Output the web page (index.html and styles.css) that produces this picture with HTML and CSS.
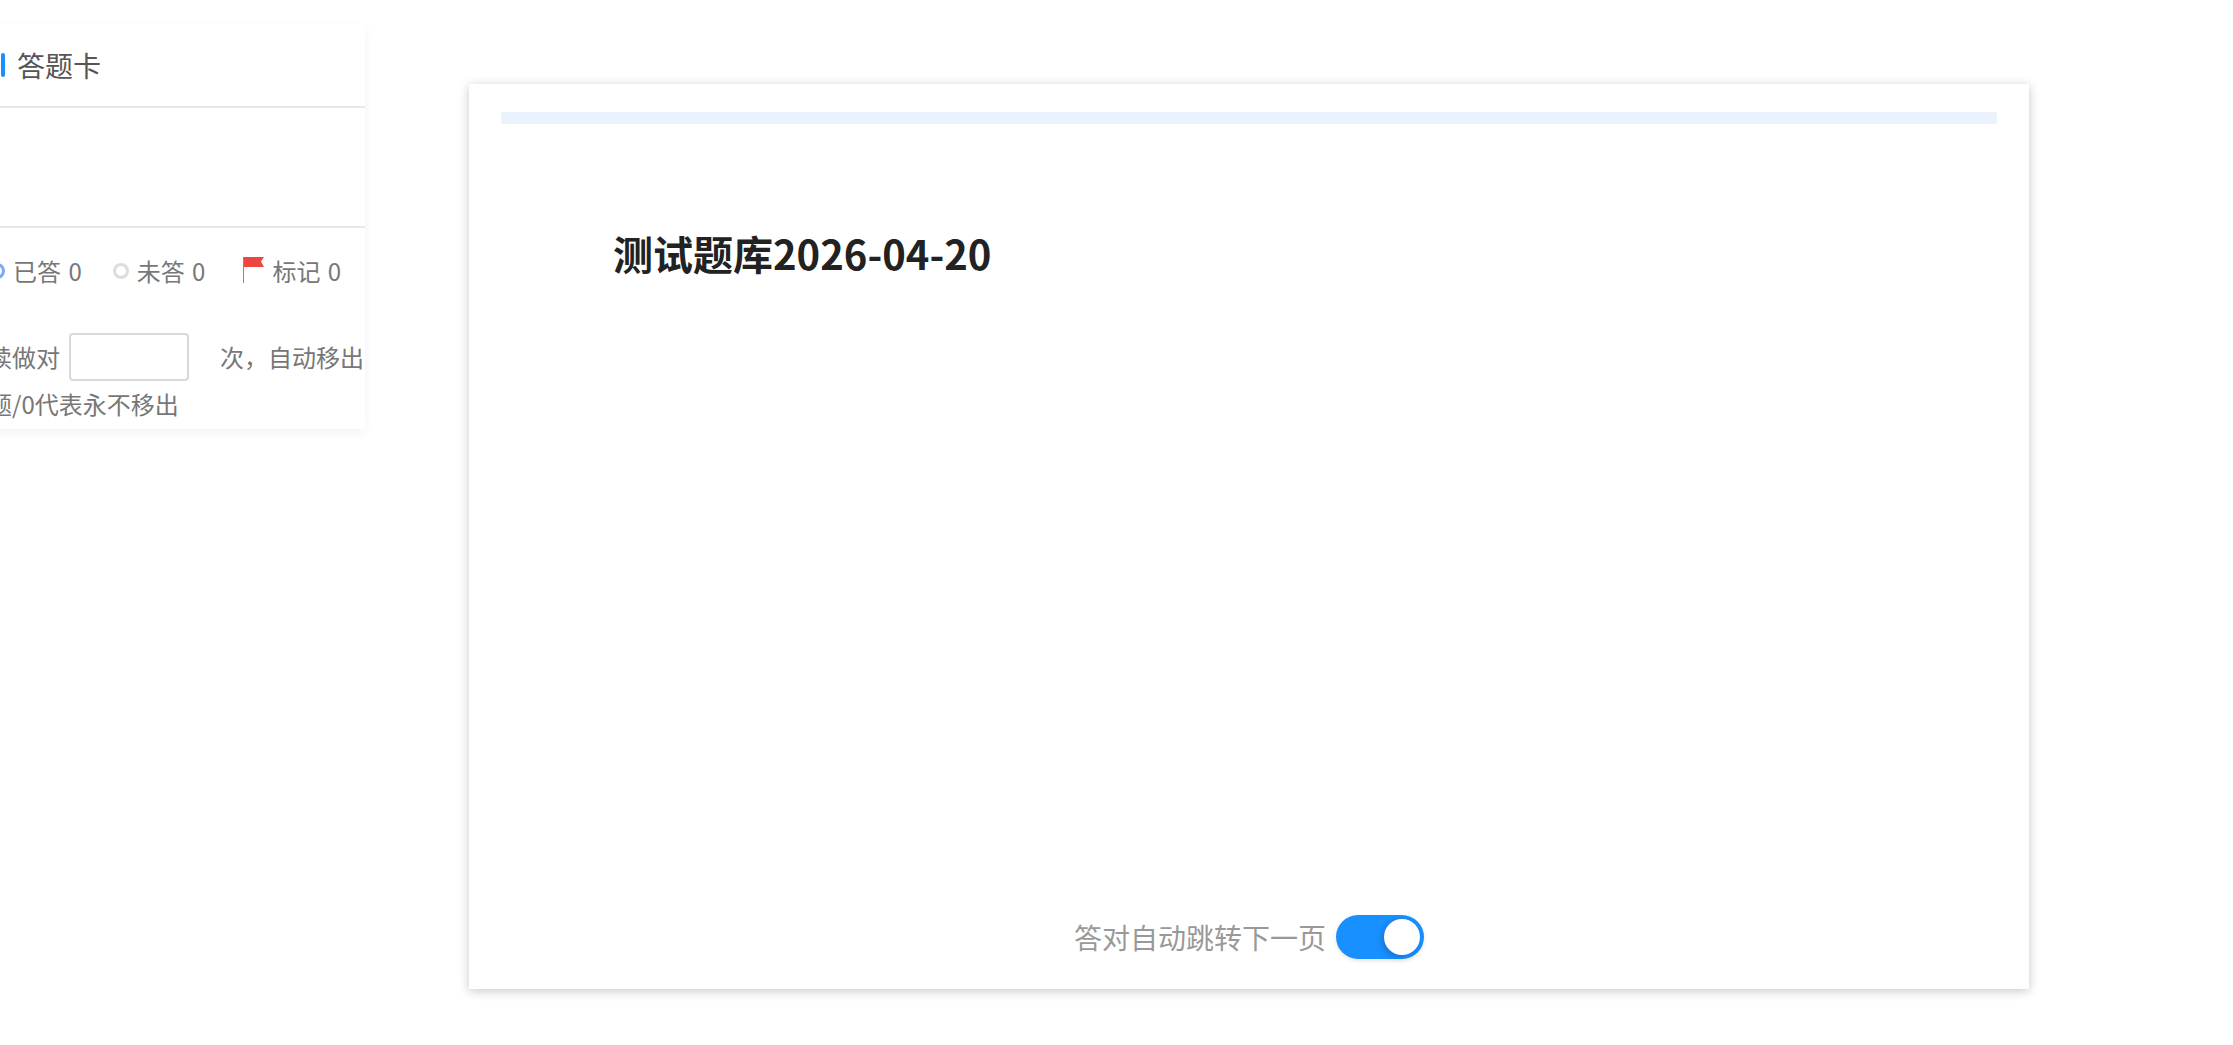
FILE: index.html
```html
<!DOCTYPE html>
<html lang="zh-CN">
<head>
<meta charset="UTF-8">
<meta name="viewport" content="width=device-width, initial-scale=1.0">
<title>答题</title>
<link rel="stylesheet" href="styles.css">
</head>
<body>

<div class="page">
  <!-- 答题卡 -->
  <aside class="sheet">
    <div class="sheet-head"><span class="sheet-bar"></span>答题卡</div>
    <div class="sheet-grid"></div>
    <div class="legend">
      <span class="legend-item"><i class="dot dot-done"></i>已答 0</span>
      <span class="legend-item"><i class="dot"></i>未答 0</span>
      <span class="legend-item legend-flag"><svg class="flag" width="21" height="26" viewBox="0 0 21 26"><path d="M0 0h1v26H0z" fill="#f0625c"/><path d="M1 0h20l-3 4.500 3 5.500H1z" fill="#ee4540"/></svg>标记 0</span>
    </div>
    <p class="remove-rule">连续做对<input class="remove-input" type="text">次，自动移出<br>本题/0代表永不移出</p>
  </aside>

  <!-- 题目 -->
  <main class="paper">
    <div class="progress"></div>
    <h1 class="paper-title">测试题库2026-04-20</h1>
    <div class="paper-foot">
      <span>答对自动跳转下一页</span>
      <span class="switch"><span class="switch-knob"></span></span>
    </div>
  </main>
</div>

</body>
</html>
```

FILE: styles.css
```css
html,body{margin:0;height:100%;overflow:hidden;background:#fff;}
body{font-family:"Noto Sans CJK SC","Noto Sans",sans-serif;}
.page{display:flex;align-items:flex-start;width:2233px;height:1045px;}

/* 答题卡 */
.sheet{flex:none;width:425px;margin:24px 0 0 -60px;height:405px;background:#fff;box-shadow:0 4px 10px rgba(0,0,0,.05);color:#777;font-size:24px;}
.sheet-head{display:flex;align-items:center;height:82px;padding-left:61px;border-bottom:2px solid #e8e8e8;font-size:28px;color:#555;}
.sheet-bar{width:4px;height:24px;margin-right:12px;border-radius:2px;background:#1890ff;}
.sheet-grid{height:118px;border-bottom:2px solid #e8e8e8;}
.legend{display:flex;align-items:center;height:36px;padding:25px 0 0 49px;line-height:36px;word-spacing:2px;}
.legend-item{display:flex;align-items:center;margin-right:31px;white-space:pre;}
.legend-flag{margin-left:7px;margin-right:0;}
.dot{box-sizing:border-box;width:16px;height:16px;margin-right:8px;border:3px solid #ddd;border-radius:50%;}
.dot-done{border-color:#7aa7ff;}
.flag{margin-right:8px;margin-top:-2px;}
.remove-rule{margin:47px 0 0 24px;line-height:40px;white-space:nowrap;}
.remove-input{box-sizing:border-box;width:120px;height:48px;margin:-3px 31px 3px 9px;padding:0;border:2px solid #d9d9d9;border-radius:4px;background:#fff;vertical-align:middle;}

/* 题目 */
.paper{box-sizing:border-box;display:flex;flex-direction:column;flex:none;width:1560px;height:905px;margin:84px 0 0 104px;padding:28px 32px 0;background:#fff;box-shadow:0 2px 10px rgba(0,0,0,.22);}
.progress{height:12px;border-radius:2px;background:#eaf3fd;}
.paper-title{flex:1;margin:101px 0 0 112px;font-size:40px;line-height:56px;font-weight:700;color:#222;}
.paper-foot{display:flex;align-items:center;justify-content:center;gap:10px;height:44px;margin-bottom:30px;font-size:28px;color:#999;}
.switch{display:flex;justify-content:flex-end;align-items:center;box-sizing:border-box;width:88px;height:44px;padding-right:4px;border-radius:22px;background:#1890ff;box-shadow:0 2px 4px rgba(0,0,0,.1);}
.switch-knob{width:36px;height:36px;border-radius:50%;background:#fff;box-shadow:-2px 2px 6px rgba(0,0,0,.2);}
```
